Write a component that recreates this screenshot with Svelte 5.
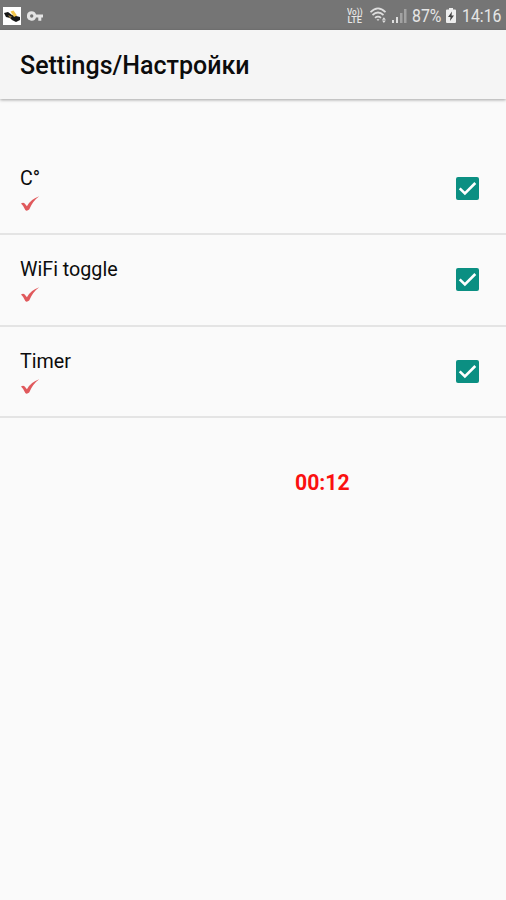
<script>
    let options = $state([
        { name: 'C°', checked: true },
        { name: 'WiFi toggle', checked: true },
        { name: 'Timer', checked: true }
    ])

    const toggle = option => {
        option.checked = !option.checked
    }
</script>

<div class="screen">
    <div class="status">
        <svg class="app-icon" width="18" height="18" viewBox="0 0 18 18">
            <rect width="18" height="18" fill="#fff"/>
            <path d="M1 6l4-1 4 3 4 1 4 1v3l-4 2-4-2-2-2-4-1z" fill="#161616"/>
            <path d="M7.500 4.500l3-1 3.500 5-3 1.500z" fill="#f3c64c"/>
            <path d="M5 8l4 1.500-2 2z" fill="#8d7440"/>
        </svg>
        <svg class="key" width="16" height="10" viewBox="0 0 17 10">
            <path fill="#e4e4e4" fill-rule="evenodd" d="M5 0a5 5 0 1 0 4.6 6.7H12V10h3.2V6.7H17V3.3H9.6A5 5 0 0 0 5 0zm0 3.2a1.8 1.8 0 1 1 0 3.6 1.8 1.8 0 0 1 0-3.6z"/>
        </svg>
        <svg class="lte" width="16" height="17" viewBox="0 0 16 17">
            <text x="0" y="7.500" textLength="15.500" lengthAdjust="spacingAndGlyphs">Vo))</text>
            <text x="0.500" y="16" textLength="14.500" lengthAdjust="spacingAndGlyphs">LTE</text>
        </svg>
        <svg class="wifi" width="19" height="17" viewBox="0 0 19 17" fill="none" stroke="#dedede" stroke-width="1.7">
            <path d="M.5 5.200Q8-2.300 15.500 5.200M2.500 8Q8 3 13.500 8M5 10.800Q8 8.300 11 10.800"/>
            <path d="M6.500 12.300h3L8 14z" fill="#dedede" stroke="none"/>
            <path d="M12 12.700l1.900-2.500 1.900 2.500zM12 13.600l1.900 2.500 1.900-2.500z" fill="#dedede" stroke="none"/>
        </svg>
        <svg class="signal" width="15" height="15" viewBox="0 0 15 15">
            <path d="M0 12h2v3H0zM4 9h2v6H4z" fill="#dedede"/>
            <path d="M8 5h2.500v10H8zM12 1h2.500v14H12z" fill="#a2a2a2"/>
        </svg>
        <span class="battery-level">87%</span>
        <svg class="battery" width="10" height="15" viewBox="0 0 10 15">
            <path d="M3 0h4v1.500h2q1 0 1 1V14q0 1-1 1H1q-1 0-1-1V2.500q0-1 1-1h2z" fill="#eee"/>
            <path d="M6 3.500L2 9h2.500L4 13l4-5.500H5.500z" fill="#444"/>
        </svg>
        <span class="clock">14:16</span>
    </div>

    <header>
        <h1>Settings/Настройки</h1>
    </header>

    <ul>
        {#each options as option}
            <li>
                <div class="label">
                    <span>{option.name}</span>
                    <svg width="20" height="16" viewBox="0 0 20 16">
                        {#if option.checked}
                            <path d="M1 7.500Q3.200 5.800 4.700 7.500L6.900 10.200Q11 3 19.200.3Q12.700 5 9.200 13.500Q6.800 15.500 5.300 14Q3.800 10 1 7.500z" fill="#e0595c"/>
                        {/if}
                    </svg>
                </div>
                <button class:checked={option.checked} role="checkbox" aria-checked={option.checked} aria-label={option.name} onclick={() => toggle(option)}>
                    {#if option.checked}
                        <svg width="23" height="23" viewBox="0 0 23 23">
                            <path d="M3.700 11.300l5.200 5.200L19.300 6" fill="none" stroke="#fff" stroke-width="2.600"/>
                        </svg>
                    {/if}
                </button>
            </li>
        {/each}
    </ul>

    <div class="timer">00:12</div>
</div>

<style>
    :global(body) {
        background-color: #fafafa;
    }

    .screen {
        min-height: 900px;
        background-color: #fafafa;
        color: #0c0c0c;
        font-family: Roboto, sans-serif;
    }

    .status {
        display: flex;
        align-items: center;
        box-sizing: border-box;
        height: 30px;
        padding: 1px 5px 0 3px;
        background-color: #757575;
        color: #e6e6e6;
        font-size: 18px;
    }

    .key {
        margin-left: 6px;
    }

    .lte {
        margin-left: auto;
        fill: #e6e6e6;
        font-size: 9px;
        font-weight: 500;
    }

    .wifi {
        margin-left: 7px;
    }

    .signal {
        margin-left: 3px;
    }

    .battery-level,
    .clock {
        white-space: nowrap;
        transform: scaleX(.88);
        transform-origin: left;
    }

    .battery-level {
        width: 29px;
        margin-left: 5px;
    }

    .battery {
        margin: 0 6px 0 5px;
    }

    .clock {
        width: 39px;
    }

    header {
        display: flex;
        align-items: center;
        height: 69px;
        padding: 0 20px;
        background-color: #f5f5f5;
        box-shadow: 0 1px 3px rgba(0, 0, 0, .35);
    }

    h1 {
        margin: 2px 0 0;
        font-size: 25px;
        font-weight: 500;
    }

    ul {
        margin: 45px 0 0;
        padding: 0;
        list-style: none;
    }

    li {
        display: flex;
        justify-content: space-between;
        box-sizing: border-box;
        height: 91.4px;
        padding: 23px 27px 0 20px;
        border-bottom: 2px solid #e4e4e4;
    }

    .label {
        display: flex;
        flex-direction: column;
        font-size: 19.7px;
        line-height: 24px;
    }

    .label svg {
        margin-top: 5px;
    }

    button {
        width: 23px;
        height: 23px;
        margin: 10px 0 0;
        padding: 0;
        border: 2px solid #757575;
        border-radius: 2px;
        background: none;
    }

    button.checked {
        border: none;
        background-color: #0b8f82;
    }

    button svg {
        display: block;
    }

    .timer {
        margin: 52px 0 0 295px;
        color: #fa1010;
        font-size: 21.2px;
        font-weight: 700;
        line-height: 26px;
    }
</style>
